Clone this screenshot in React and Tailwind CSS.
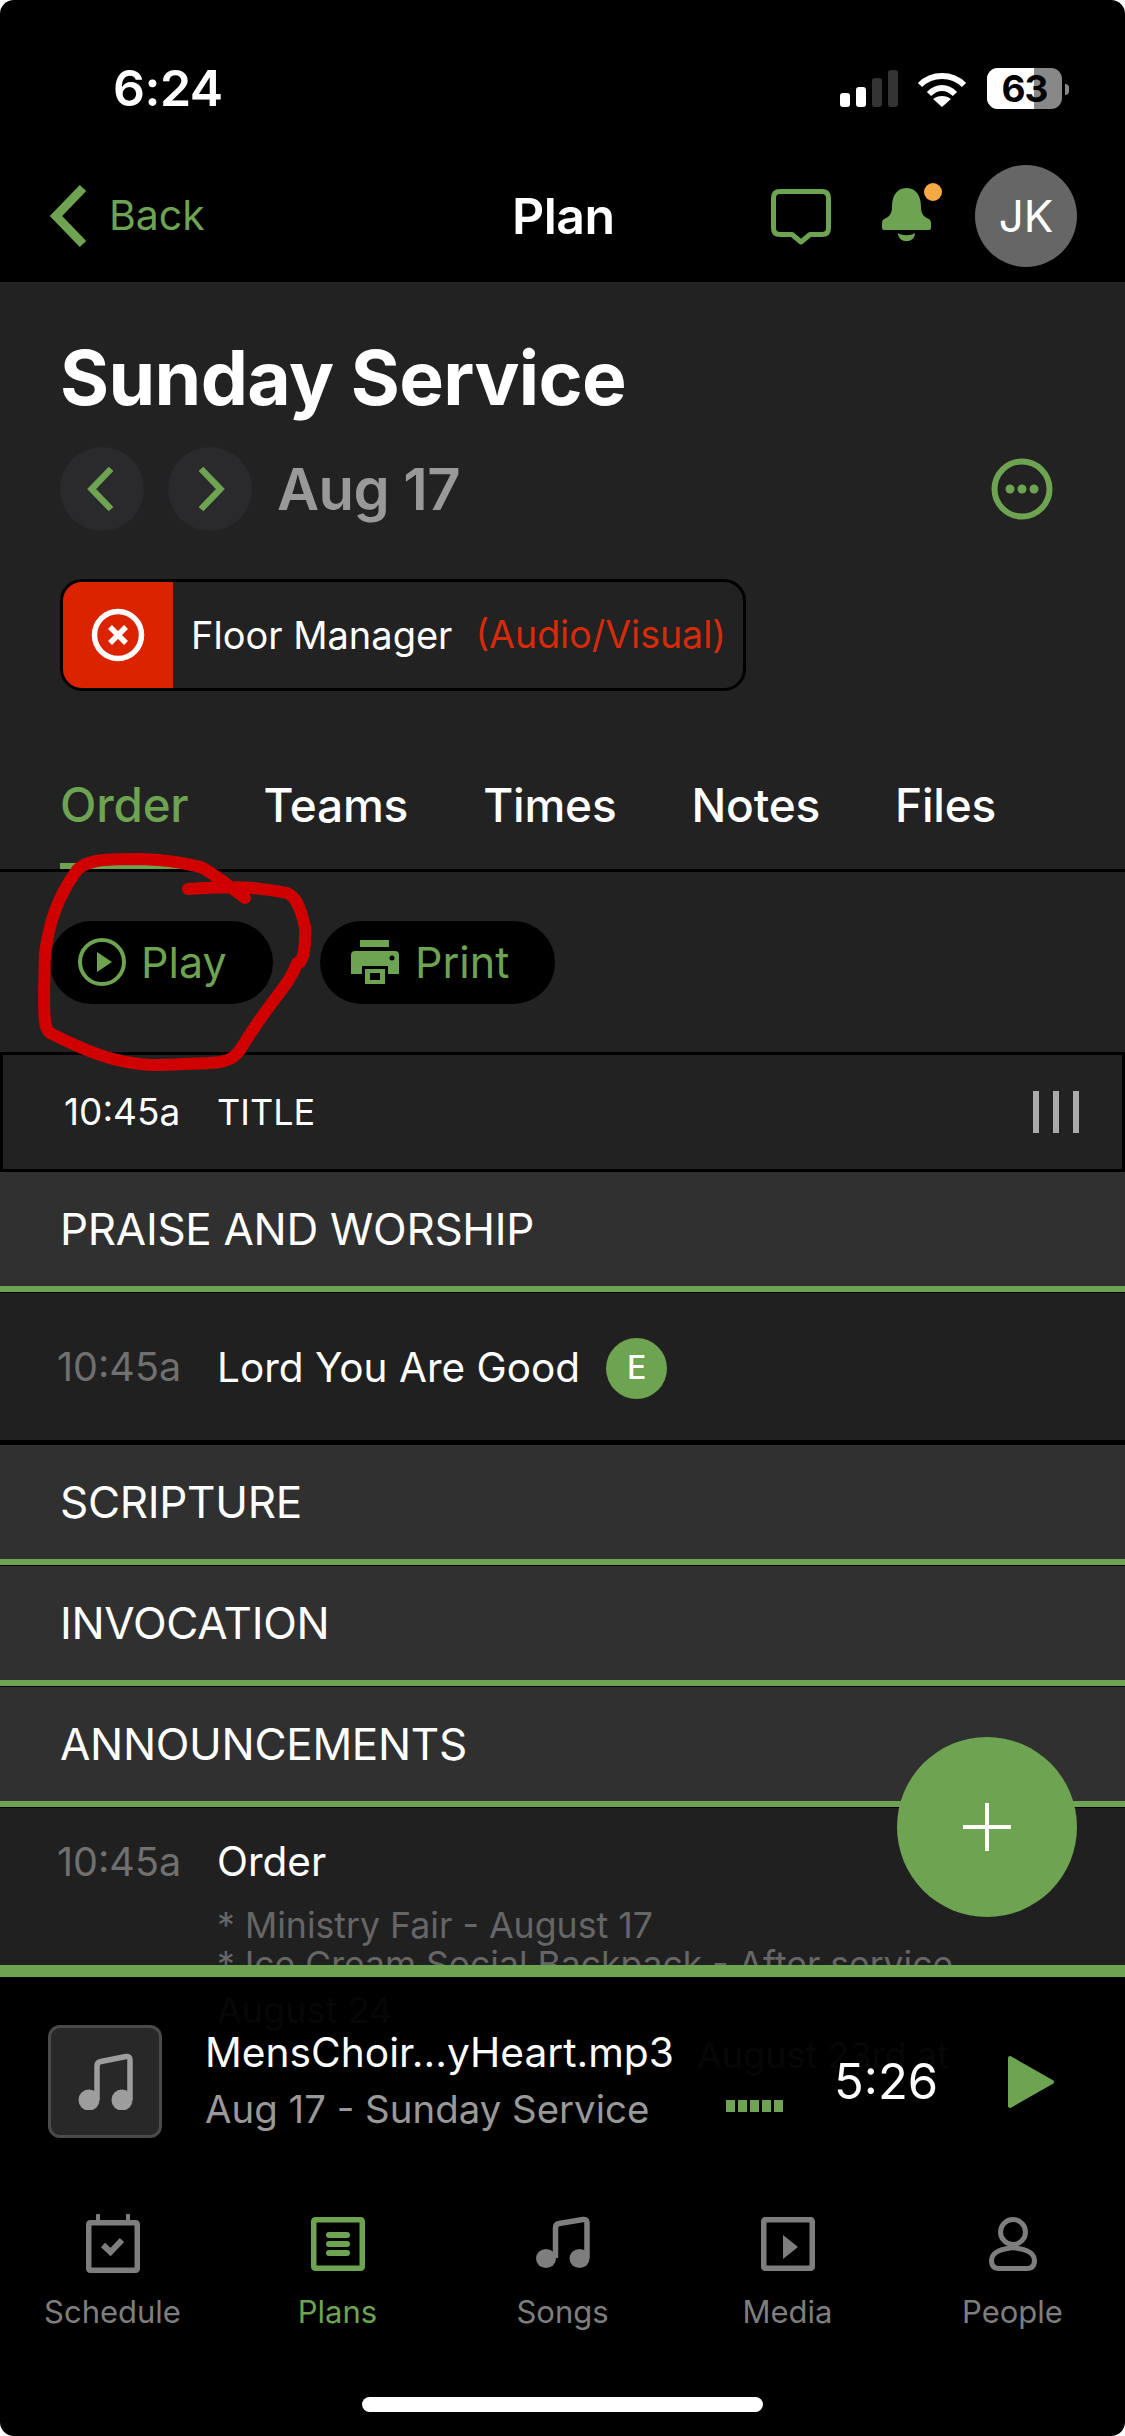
import React from 'react';

const green = '#6da351';

const Chevron = ({ dir = 'left', className }) => (
  <svg viewBox="0 0 40 64" className={className} fill="none">
    <path d={dir === 'left' ? 'M34 4 L7 32 L34 60' : 'M6 4 L33 32 L6 60'} stroke={green} strokeWidth="9" />
  </svg>
);

const SectionHeader = ({ title }) => (
  <div className="h-[121px] border-b-[1px] border-black flex">
    <div className="flex-1 bg-[#303030] border-b-[6px] border-[#6da351] flex items-center pl-[60px] text-white text-[44px] tracking-[-0.3px]">
      {title}
    </div>
  </div>
);

const StatusBar = () => (
  <div className="h-[150px] flex justify-between pt-[58px] pl-[113px] pr-[56px]">
    <span className="text-[50px] leading-[60px] font-semibold text-white tracking-[-0.5px]">6:24</span>
    <div className="flex items-start pt-[12px]">
      <svg viewBox="0 0 58 37" className="w-[58px] h-[37px]">
        <rect x="0" y="23" width="10" height="14" rx="3" fill="#fff" />
        <rect x="16" y="17" width="10" height="20" rx="3" fill="#fff" />
        <rect x="32" y="8" width="10" height="29" rx="3" fill="#333" />
        <rect x="48" y="0" width="10" height="37" rx="3" fill="#333" />
      </svg>
      <svg viewBox="0 0 50 36" className="ml-[19px] mt-[2px] w-[50px] h-[36px]" fill="none" stroke="#fff" strokeWidth="6">
        <path d="M3 13 C15 1 35 1 47 13" />
        <path d="M12 22 C20 14 30 14 38 22" />
        <path d="M25 35 L16 27 C21 23 29 23 34 27 Z" fill="#fff" stroke="none" />
      </svg>
      <div className="relative ml-[20px] -mt-[2px] w-[75px] h-[41px] rounded-[11px] bg-[#888] flex items-center justify-center">
        <div className="absolute left-0 top-0 bottom-0 w-[47px] rounded-l-[11px] bg-white" />
        <span className="relative text-[37px] leading-none font-bold text-black tracking-[-1px]">63</span>
      </div>
      <div className="ml-[3px] mt-[14px] w-[4px] h-[11px] rounded-r-full bg-[#888]" />
    </div>
  </div>
);

const NavBar = () => (
  <div className="relative h-[132px] flex items-center pl-[49px] pr-[48px]">
    <Chevron className="w-[40px] h-[64px]" />
    <span className="ml-[20px] text-[41px] text-[#6da351]">Back</span>
    <span className="absolute left-[512px] text-[50px] font-semibold text-white tracking-[-0.5px]">Plan</span>
    <div className="ml-auto flex items-center">
      <svg viewBox="0 0 60 56" className="w-[60px] h-[56px] mr-[51px] mt-[2px]" fill="none">
        <path d="M9 2.5 H51 Q57.5 2.5 57.5 9 V39 Q57.5 45.5 51 45.5 H39 L30 53 L21 45.5 H9 Q2.5 45.5 2.5 39 V9 Q2.5 2.5 9 2.5 Z" stroke={green} strokeWidth="5" strokeLinejoin="round" />
      </svg>
      <svg viewBox="0 0 60 60" className="w-[60px] h-[60px] mr-[33px] -mt-[6px]">
        <path d="M24.5 5 C35 5 39 14 39 24 C39 31 42 34 47 36 Q49 37 49 40 V45 Q49 47 47 47 H2 Q0 47 0 45 V40 Q0 37 2 36 C7 34 10 31 10 24 C10 14 14 5 24.5 5 Z" fill={green} />
        <path d="M16 50 C20 53 29 53 33 50 C33 61 16 61 16 50 Z" fill={green} />
        <circle cx="51" cy="9" r="9" fill="#f6a844" />
      </svg>
      <div className="w-[102px] h-[102px] rounded-full bg-[#666] flex items-center justify-center text-white text-[44px]">JK</div>
    </div>
  </div>
);

const PlanHeader = () => (
  <div className="h-[587px] bg-[#222] pl-[60px] pr-[72px] pt-[52px]">
    <h1 className="text-[75px] leading-[88px] font-bold text-white tracking-[-0.6px]">Sunday Service</h1>
    <div className="mt-[25px] flex items-center h-[84px]">
      <div className="w-[84px] h-[84px] rounded-full bg-[#2a2a2c] flex items-center justify-center">
        <Chevron className="w-[30px] h-[46px] -ml-[2px]" />
      </div>
      <div className="ml-[24px] w-[84px] h-[84px] rounded-full bg-[#2a2a2c] flex items-center justify-center">
        <Chevron dir="right" className="w-[30px] h-[46px] ml-[2px]" />
      </div>
      <span className="ml-[25px] text-[58px] font-semibold text-[#999] tracking-[-0.6px]">Aug 17</span>
      <svg viewBox="0 0 62 62" className="ml-auto w-[62px] h-[62px]">
        <circle cx="31" cy="31" r="27.5" fill="none" stroke={green} strokeWidth="6" />
        <circle cx="19" cy="31" r="4.5" fill={green} />
        <circle cx="31" cy="31" r="4.5" fill={green} />
        <circle cx="43" cy="31" r="4.5" fill={green} />
      </svg>
    </div>
    <div className="mt-[48px] w-[686px] h-[112px] rounded-[22px] border-[3px] border-black flex overflow-hidden">
      <div className="w-[110px] bg-[#dc2300] flex items-center justify-center">
        <svg viewBox="0 0 54 54" className="w-[54px] h-[54px]">
          <circle cx="27" cy="27" r="23.5" fill="none" stroke="#fff" strokeWidth="5.5" />
          <path d="M19 19 L35 35 M35 19 L19 35" stroke="#fff" strokeWidth="5.5" />
        </svg>
      </div>
      <div className="flex items-center pl-[18px] text-[38px] whitespace-nowrap">
        <span className="text-white">Floor Manager</span>
        <span className="ml-[23px] text-[37.5px] text-[#d82a0b]">(Audio/Visual)</span>
      </div>
    </div>
  </div>
);

const Tabs = () => {
  const tabs = ['Order', 'Teams', 'Times', 'Notes', 'Files'];
  return (
    <div className="relative h-[3px] bg-black">
      <div className="absolute bottom-[3px] left-[60px] flex gap-[75px] text-[46px] font-medium text-white leading-[60px] mb-[34px] tracking-[-0.2px]">
        {tabs.map((t, i) => (
          <span key={t} className={i === 0 ? 'text-[47.5px] text-[#6da351]' : ''}>{t}</span>
        ))}
      </div>
      <div className="absolute left-[60px] bottom-[3px] w-[128px] h-[6px] bg-[#6da351]" />
    </div>
  );
};

const Actions = () => (
  <div className="h-[180px] bg-[#222] flex items-center pl-[50px] gap-[47px]">
    <div className="w-[223px] h-[83px] rounded-full bg-black flex items-center pl-[28px] text-[43px] text-[#6da351]">
      <svg viewBox="0 0 48 48" className="w-[48px] h-[48px]">
        <circle cx="24" cy="24" r="22" fill="none" stroke={green} strokeWidth="4" />
        <path d="M19 14 L34 24 L19 34 Z" fill={green} />
      </svg>
      <span className="ml-[15px]">Play</span>
    </div>
    <div className="w-[235px] h-[83px] rounded-full bg-black flex items-center pl-[31px] text-[43px] text-[#6da351]">
      <svg viewBox="0 0 48 44" className="w-[48px] h-[44px]">
        <rect x="9" y="0" width="29" height="7" fill={green} />
        <path d="M4 11 H44 Q48 11 48 15 V34 H37 V26 H11 V34 H0 V15 Q0 11 4 11 Z" fill={green} />
        <path d="M14 29 H34 V44 H14 Z M19 33 V40 H29 V33 Z" fill={green} fillRule="evenodd" />
        <circle cx="41" cy="18" r="2.5" fill="#000" />
      </svg>
      <span className="ml-[16px]">Print</span>
    </div>
  </div>
);

const TitleRow = () => (
  <div className="h-[120px] bg-[#222] border-[3px] border-black flex items-center text-white pl-[61px] pr-[43px]">
    <span className="w-[153px] text-[37px]">10:45a</span>
    <span className="text-[36px]">TITLE</span>
    <div className="ml-auto flex gap-[14px]">
      <div className="w-[6px] h-[42px] bg-[#aaa]" />
      <div className="w-[6px] h-[42px] bg-[#aaa]" />
      <div className="w-[6px] h-[42px] bg-[#aaa]" />
    </div>
  </div>
);

const Player = () => (
  <div className="relative h-[208px] bg-black flex pl-[48px] pt-[48px]">
    {/* list text showing faintly through the translucent bar */}
    <span className="absolute left-[217px] top-[10px] text-[36px] leading-[46px] text-[#070707]">August 24</span>
    <span className="absolute left-[697px] top-[55px] text-[36px] leading-[46px] text-[#070707]">August 23rd at</span>
    <div className="w-[114px] h-[113px] rounded-[12px] bg-[#282828] border-[3px] border-[#4a4a4a] flex items-center justify-center">
      <svg viewBox="0 0 55 57" className="w-[55px] h-[57px]">
        <path d="M19 47 V13 Q19 9 23 8.5 L48 3.5 Q52 3 52 7 V47" fill="none" stroke="#9d9d9d" strokeWidth="5.5" strokeLinejoin="round" />
        <circle cx="11" cy="47" r="10.5" fill="#9d9d9d" />
        <circle cx="44" cy="47" r="10.5" fill="#9d9d9d" />
      </svg>
    </div>
    <div className="relative ml-[43px] flex flex-col pt-[3px]">
      <span className="text-[40.7px] leading-[50px] text-white">MensChoir...yHeart.mp3</span>
      <span className="mt-[8px] text-[38.4px] leading-[46px] text-[#999]">Aug 17 - Sunday Service</span>
    </div>
    <div className="absolute left-[726px] top-[123px] flex gap-[3px]">
      {[0, 1, 2, 3, 4].map((i) => (
        <div key={i} className="w-[9px] h-[12px] bg-[#6da351]" />
      ))}
    </div>
    <span className="absolute left-[834px] top-[75px] text-[49px] leading-[60px] text-white">5:26</span>
    <svg viewBox="0 0 48 54" className="absolute left-[1007px] top-[78px] w-[48px] h-[54px]">
      <path d="M3 3 L45 27 L3 51 Z" fill={green} stroke={green} strokeWidth="4" strokeLinejoin="round" />
    </svg>
  </div>
);

const iconColor = '#7e7e7e';

const ScheduleIcon = () => (
  <svg viewBox="0 0 54 60" className="w-[54px] h-[60px]" fill="none">
    <path d="M12 1.5 V8 M42 1.5 V8" stroke={iconColor} strokeWidth="4" strokeLinecap="round" />
    <rect x="2.75" y="8.75" width="48.5" height="47.5" rx="1.5" stroke={iconColor} strokeWidth="5.5" />
    <path d="M17 31 L24.5 38 L36 26" stroke={iconColor} strokeWidth="6" />
  </svg>
);

const PlansIcon = () => (
  <svg viewBox="0 0 54 60" className="w-[54px] h-[60px]" fill="none">
    <rect x="2.75" y="5.75" width="48.5" height="48.5" rx="1.5" stroke={green} strokeWidth="5.5" />
    <rect x="15" y="18" width="24" height="6" rx="3" fill={green} />
    <rect x="15" y="27" width="24" height="6" rx="3" fill={green} />
    <rect x="15" y="36" width="24" height="6" rx="3" fill={green} />
  </svg>
);

const SongsIcon = () => (
  <svg viewBox="0 0 54 60" className="w-[54px] h-[60px]">
    <path d="M19.5 44 V14 Q19.5 10 23 9.5 L47 5.5 Q51 5 51 9 V44" fill="none" stroke={iconColor} strokeWidth="5.5" strokeLinejoin="round" />
    <ellipse cx="10" cy="44.5" rx="10" ry="9.5" fill={iconColor} />
    <ellipse cx="43.5" cy="44.5" rx="10" ry="9.5" fill={iconColor} />
  </svg>
);

const MediaIcon = () => (
  <svg viewBox="0 0 54 60" className="w-[54px] h-[60px]" fill="none">
    <rect x="2.75" y="5.75" width="48.5" height="48.5" rx="1.5" stroke={iconColor} strokeWidth="5.5" />
    <path d="M22 21 L37 33 L22 45 Z" fill={iconColor} />
  </svg>
);

const PeopleIcon = () => (
  <svg viewBox="0 0 54 60" className="w-[54px] h-[60px]" fill="none" stroke={iconColor} strokeWidth="5">
    <circle cx="27" cy="18" r="12.5" />
    <path d="M27 33.5 C37 35 48 37 48.5 46 C48.5 52 46 54.5 41 54.5 H13 C8 54.5 5.5 52 5.5 46 C6 37 17 35 27 33.5 Z" />
  </svg>
);

const TabBar = () => {
  const items = [
    { label: 'Schedule', icon: <ScheduleIcon /> },
    { label: 'Plans', icon: <PlansIcon />, active: true },
    { label: 'Songs', icon: <SongsIcon /> },
    { label: 'Media', icon: <MediaIcon /> },
    { label: 'People', icon: <PeopleIcon /> },
  ];
  return (
    <div className="grid grid-cols-5 pt-[29px]">
      {items.map((item) => (
        <div key={item.label} className="flex flex-col items-center">
          {item.icon}
          <span className={`mt-[19px] text-[31px] leading-[38px] ${item.active ? 'text-[#6da351]' : 'text-[#7e7e7e]'}`}>
            {item.label}
          </span>
        </div>
      ))}
    </div>
  );
};

// hand-drawn red ring from the reference, sits on top of everything
const Annotation = () => (
  <svg viewBox="0 0 1125 2436" className="absolute inset-0 w-[1125px] h-[2436px] pointer-events-none" fill="none">
    <path
      d="M188 889 C215 887 250 885 287 893 C295 896 300 905 305 927 C306 950 302 965 297 963 C290 985 270 1000 240 1050 C228 1065 223 1063 150 1065 C120 1063 95 1056 50 1033 C44 1028 43 1020 45 953 C50 920 57 898 77 870 C88 860 100 859 140 859 C170 860 190 864 203 868 C215 875 228 885 245 898"
      stroke="#d10000"
      strokeWidth="12"
      strokeLinecap="round"
      strokeLinejoin="round"
    />
  </svg>
);

export default function App() {
  return (
    <div className="bg-white w-[1125px] h-[2436px]">
      <div className="relative w-[1125px] h-[2436px] bg-black rounded-[14px] overflow-hidden [font-family:Inter,'Liberation_Sans',sans-serif]">
        <StatusBar />
        <NavBar />
        <PlanHeader />
        <Tabs />
        <Actions />
        <TitleRow />
        <div className="h-[793px] bg-[#202020] overflow-hidden">
          <SectionHeader title="PRAISE AND WORSHIP" />
          <div className="h-[152px] border-b-[5px] border-black flex items-center pl-[57px] pt-[3px]">
            <span className="w-[160px] text-[39.5px] text-[#707070]">10:45a</span>
            <span className="text-[40.5px] text-white">Lord You Are Good</span>
            <span className="ml-[26px] w-[61px] h-[61px] rounded-full bg-[#6da351] flex items-center justify-center text-white text-[32px] font-medium">E</span>
          </div>
          <SectionHeader title="SCRIPTURE" />
          <SectionHeader title="INVOCATION" />
          <SectionHeader title="ANNOUNCEMENTS" />
          <div className="pl-[57px] pt-[31px] flex">
            <span className="w-[160px] text-[39.5px] leading-[46px] text-[#707070]">10:45a</span>
            <div>
              <p className="text-[40.5px] leading-[46px] text-white">Order</p>
              <p className="mt-[20px] text-[35.7px] leading-[40px] text-[#666]">* Ministry Fair - August 17</p>
              <p className="text-[35.5px] leading-[40px] text-[#666] whitespace-nowrap">* Ice Cream Social Backpack - After service</p>
            </div>
          </div>
        </div>
        <div className="h-[12px] bg-[#6da351]" />
        <Player />
        <TabBar />
        <div className="absolute left-[362px] top-[2397px] w-[401px] h-[15px] rounded-full bg-white" />
        <div className="absolute left-[897px] top-[1737px] w-[180px] h-[180px] rounded-full bg-[#6da351] flex items-center justify-center">
          <svg viewBox="0 0 48 48" className="w-[48px] h-[48px]">
            <path d="M24 0 V48 M0 24 H48" stroke="#fff" strokeWidth="4" />
          </svg>
        </div>
        <Annotation />
      </div>
    </div>
  );
}
